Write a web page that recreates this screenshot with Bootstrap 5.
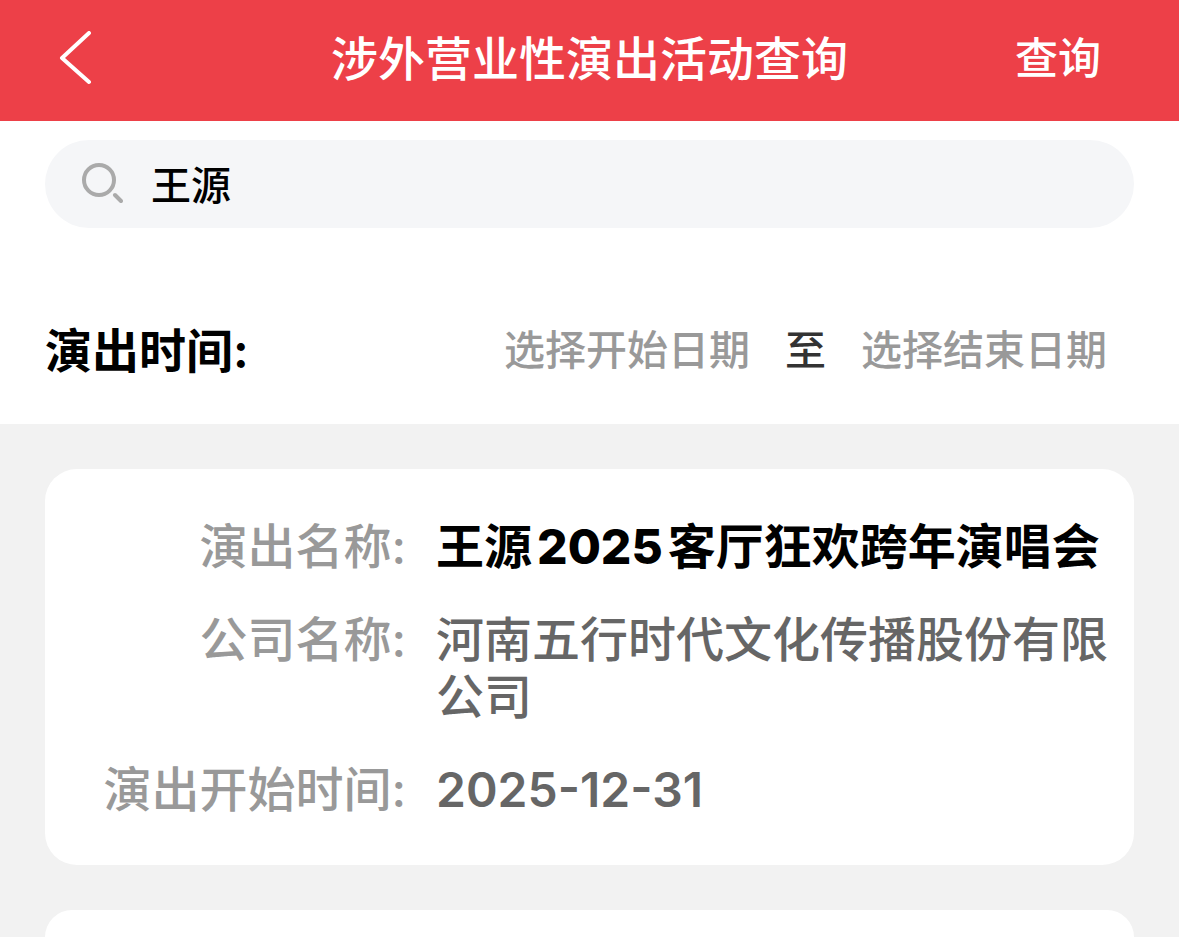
<!DOCTYPE html>
<html lang="zh-CN">
<head>
<meta charset="utf-8">
<meta name="viewport" content="width=device-width, initial-scale=1">
<title>涉外营业性演出活动查询</title>
<link href="https://cdn.jsdelivr.net/npm/bootstrap@5.3.0/dist/css/bootstrap.min.css" rel="stylesheet">
<style>
body { background: #f2f2f2; color: #000; font-family: Inter, "Noto Sans CJK SC", sans-serif; font-size: 48px; font-weight: 500; line-height: 57px; }
button, input { font: inherit; color: inherit; }
.app-bar { background: #ed4048; color: #fff; display: grid; grid-template-columns: 1fr auto 1fr; align-items: center; padding: 30px 54px 34px; }
.app-bar h1, .date-row h2 { font-size: 47px; line-height: 57px; }
.app-bar h1 { font-weight: 500; }
.date-row h2 { font-weight: 700; }
.plain-btn { background: none; border: 0; padding: 0; }
.back-btn { justify-self: start; }
.query-btn { font-size: 43px; justify-self: end; margin-right: 24px; }
.filters { background: #fff; padding: 19px 45px 45px; }
.search-field { background: #f5f6f8; padding: 14px 36px; gap: 28px; }
.search-field input { background: none; border: 0; outline: 0; padding: 3px 0 0; font-size: 40px; line-height: 57px; min-width: 0; }
.date-row { margin-top: 94px; font-size: 41px; padding-right: 27px; gap: 35px; }
.date-btn { color: #999; }
.date-to { color: #333; }
.results { padding: 45px 45px 0; gap: 45px; }
.result-card { background: #fff; border-radius: 32px; padding: 49px 24px 47px 15px; }
.result-card dl { display: grid; grid-template-columns: 346px 1fr; column-gap: 30px; row-gap: 36px; }
.result-card dt { color: #999; font-weight: 500; text-align: right; white-space: nowrap; }
.result-card dd { color: #666; margin: 0; }
.result-card .show-name { color: #000; font-weight: 700; }
.show-name span { margin: 0 5px; font-weight: 800; }
.result-card .show-date { font-weight: 600; }
.next-card { border-radius: 32px 32px 0 0; padding: 0; min-height: 27px; }
</style>
</head>
<body class="d-flex flex-column min-vh-100">
<header class="app-bar">
<button class="plain-btn back-btn d-flex" type="button" aria-label="返回"><svg width="40" height="56" viewBox="0 0 40 56" fill="none" stroke="#fff" stroke-width="4" stroke-linecap="round" stroke-linejoin="round"><path d="M35 2 8 27l27 24"/></svg></button>
<h1 class="m-0">涉外营业性演出活动查询</h1>
<button class="plain-btn query-btn" type="submit" form="search">查询</button>
</header>
<form id="search" class="filters">
<label class="search-field d-flex align-items-center rounded-pill">
<svg width="42" height="42" viewBox="0 0 42 42" fill="none" stroke="#aaa" stroke-width="4" stroke-linecap="round"><circle cx="18" cy="17" r="15"/><path d="m34 32 6 6"/></svg>
<input class="flex-grow-1" type="text" value="王源" aria-label="搜索">
</label>
<div class="date-row d-flex align-items-center">
<h2 class="m-0 me-auto">演出时间:</h2>
<button class="plain-btn date-btn" type="button">选择开始日期</button>
<span class="date-to">至</span>
<button class="plain-btn date-btn" type="button">选择结束日期</button>
</div>
</form>
<main class="results d-flex flex-column flex-grow-1">
<article class="result-card">
<dl class="m-0">
<dt>演出名称:</dt><dd class="show-name">王源<span>2025</span>客厅狂欢跨年演唱会</dd>
<dt>公司名称:</dt><dd>河南五行时代文化传播股份有限公司</dd>
<dt>演出开始时间:</dt><dd class="show-date">2025-12-31</dd>
</dl>
</article>
<article class="result-card next-card flex-grow-1" aria-label="下一条"></article>
</main>
<script src="https://cdn.jsdelivr.net/npm/bootstrap@5.3.0/dist/js/bootstrap.bundle.min.js"></script>
</body>
</html>
